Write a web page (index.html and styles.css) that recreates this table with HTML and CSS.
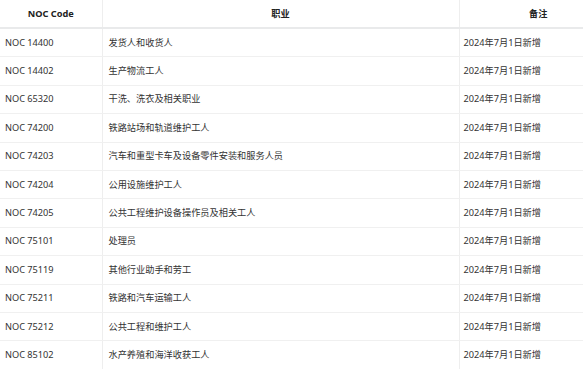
FILE: index.html
```html
<!DOCTYPE html>
<html lang="zh-CN">
<head>
<meta charset="utf-8">
<link rel="stylesheet" href="styles.css">
</head>
<body>
<div class="wrap">
<table class="noc">
  <colgroup><col class="c1"><col class="c2"><col class="c3"></colgroup>
  <thead>
    <tr><th>NOC Code</th><th>职业</th><th>备注</th></tr>
  </thead>
  <tbody>
    <tr><td>NOC 14400</td><td>发货人和收货人</td><td>2024年7月1日新增</td></tr>
    <tr><td>NOC 14402</td><td>生产物流工人</td><td>2024年7月1日新增</td></tr>
    <tr><td>NOC 65320</td><td>干洗、洗衣及相关职业</td><td>2024年7月1日新增</td></tr>
    <tr><td>NOC 74200</td><td>铁路站场和轨道维护工人</td><td>2024年7月1日新增</td></tr>
    <tr><td>NOC 74203</td><td>汽车和重型卡车及设备零件安装和服务人员</td><td>2024年7月1日新增</td></tr>
    <tr><td>NOC 74204</td><td>公用设施维护工人</td><td>2024年7月1日新增</td></tr>
    <tr><td>NOC 74205</td><td>公共工程维护设备操作员及相关工人</td><td>2024年7月1日新增</td></tr>
    <tr><td>NOC 75101</td><td>处理员</td><td>2024年7月1日新增</td></tr>
    <tr><td>NOC 75119</td><td>其他行业助手和劳工</td><td>2024年7月1日新增</td></tr>
    <tr><td>NOC 75211</td><td>铁路和汽车运输工人</td><td>2024年7月1日新增</td></tr>
    <tr><td>NOC 75212</td><td>公共工程和维护工人</td><td>2024年7月1日新增</td></tr>
    <tr><td>NOC 85102</td><td>水产养殖和海洋收获工人</td><td>2024年7月1日新增</td></tr>
  </tbody>
</table>
</div>
</body>
</html>
```

FILE: styles.css
```css
html, body {
  margin: 0;
  padding: 0;
  background: #fff;
  overflow: hidden;
}
.wrap {
  width: 583px;
  overflow: hidden;
}
.noc {
  width: 617px;
  border-collapse: collapse;
  table-layout: fixed;
  font-family: "Noto Sans", "Noto Sans CJK SC", sans-serif;
  font-size: 9.2px;
  color: #333;
}
.c1 { width: 102px; }
.c2 { width: 357px; }
.c3 { width: 158px; }
.noc th {
  font-weight: bold;
  color: #222;
  text-align: center;
  height: 27px;
  padding: 0 6px;
  line-height: 14px;
  border-bottom: 2px solid #e9eaeb;
  border-left: 1px solid #eeeeee;
}
.noc td {
  text-align: left;
  padding: 0 5px 0 6px;
  height: 27.4px;
  line-height: 14px;
  border-bottom: 1px solid #f0f0f0;
  border-left: 1px solid #eeeeee;
}
.noc td:first-child {
  padding-left: 5px;
}
.noc td:last-child {
  padding-left: 4px;
}
.noc th:first-child, .noc td:first-child {
  border-left: none;
}
```
